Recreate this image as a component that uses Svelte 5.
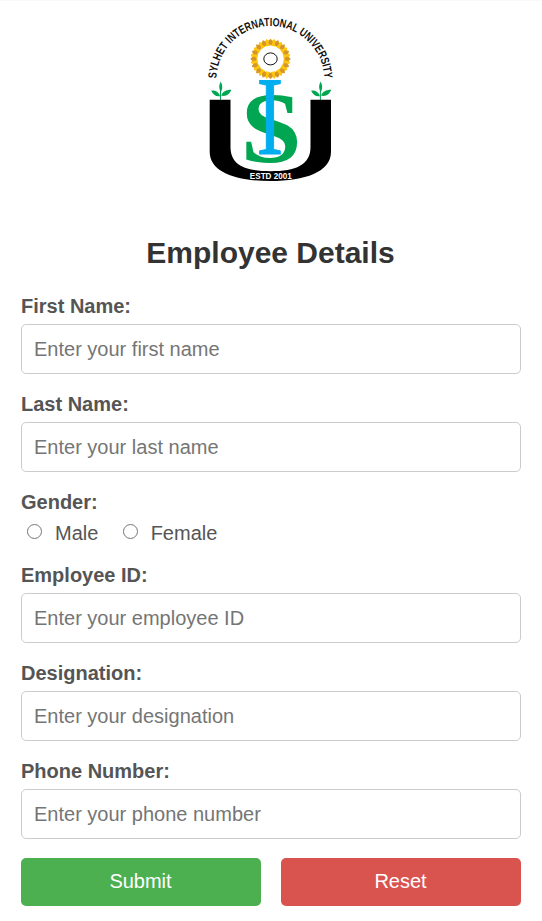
<script>
  const petals = Array.from({ length: 16 }, (_, i) => i * 22.5);
  const textFields = [
    { id: 'first', label: 'First Name:', hint: 'Enter your first name' },
    { id: 'last', label: 'Last Name:', hint: 'Enter your last name' }
  ];
  const workFields = [
    { id: 'employee', label: 'Employee ID:', hint: 'Enter your employee ID' },
    { id: 'designation', label: 'Designation:', hint: 'Enter your designation' },
    { id: 'phone', label: 'Phone Number:', hint: 'Enter your phone number' }
  ];
</script>

{#snippet field(f)}
  <div class="field">
    <label class="title" for={f.id}>{f.label}</label>
    <input class="text" id={f.id} type="text" placeholder={f.hint} />
  </div>
{/snippet}

{#snippet sprout(x)}
  <g transform="translate({x} 0)" fill="#00a651">
    <path d="M0.200 81.500 C2.300 85 2.200 88.500 0.400 92 C-2 88.500 -1.700 85 0.200 81.500Z" />
    <path d="M-9.300 90.500 C-5 90.200 -1.500 92 -0.500 96.200 C-4.500 97 -7.500 94.700 -9.300 90.500Z" />
    <path d="M10.800 89.800 C9 94.700 5 97 0.500 95.500 C2.200 91.800 6 89.600 10.800 89.800Z" />
    <path d="M0 90 V100" stroke="#00a651" stroke-width="1" />
  </g>
{/snippet}

<main>
  <svg class="logo" viewBox="200 8 140 180" width="140" height="180" role="img" aria-label="Sylhet International University">
    <path id="arch" d="M216.400 80.300 A54 54.300 0 0 1 324.400 80.300" fill="none" />
    <text class="arch-text"><textPath href="#arch" startOffset="2" textLength="166" lengthAdjust="spacingAndGlyphs">SYLHET INTERNATIONAL UNIVERSITY</textPath></text>
    <g transform="translate(270.500 58.900)">
      {#each petals as angle}
        <path transform="rotate({angle + 11.25})" d="M-2.200 -13 C-4 -16 -2.500 -18 0 -20.200 C2.500 -18 4 -16 2.200 -13Z" fill="#fdc70c" />
      {/each}
      {#each petals as angle}
        <path transform="rotate({angle})" d="M-0.800 -14 C-3 -16.500 -2 -18.500 0 -20.200 C2 -18.500 3 -16.500 0.800 -14Z" fill="#d6952a" />
      {/each}
      <ellipse rx="6.700" ry="6" fill="#fff" stroke="#111" stroke-width="1" />
    </g>
    {@render sprout(220.5)}
    {@render sprout(320.4)}
    <path d="M209.700 99.700 H230.500 V147 C230.500 165 245 171.200 270.500 171.200 S310.500 165 310.500 147 V99.700 H331 V152 C331 172 305 181 270.500 181 S209.700 172 209.700 152Z" fill="#000" />
    <text class="letter-s" transform="translate(271.100 162.600) scale(1.080 1)">S</text>
    <text class="letter-i" transform="translate(269.800 154.400) scale(0.700 1)">I</text>
    <text class="estd" x="249.800" y="178.900" textLength="42" lengthAdjust="spacingAndGlyphs">ESTD 2001</text>
  </svg>

  <h1>Employee Details</h1>

  <form>
    {#each textFields as f}{@render field(f)}{/each}
    <div class="gender">
      <div class="title">Gender:</div>
      <div class="options">
        <label><input type="radio" name="gender" value="male" />Male</label>
        <label><input type="radio" name="gender" value="female" />Female</label>
      </div>
    </div>
    {#each workFields as f}{@render field(f)}{/each}
    <div class="actions">
      <button class="submit" type="button">Submit</button>
      <button class="reset" type="reset">Reset</button>
    </div>
  </form>
</main>

<style>
  :global(body) { margin: 0; background: #fff; }
  main {
    box-sizing: border-box;
    width: 542px;
    height: 921px;
    padding: 7px 21px 0;
    border-top: 1px solid #f9f9f9;
    overflow: hidden;
    font-family: "Liberation Sans", Arial, sans-serif;
    font-size: 20px;
    color: #555;
  }
  .logo { display: block; margin: 0 160px 0 179px; }
  .arch-text { font: bold 11.8px "Liberation Sans", Arial, sans-serif; fill: #111; }
  .estd { font: bold 8.7px "Liberation Sans", Arial, sans-serif; fill: #fff; }
  .letter-s {
    font: bold 102px "Liberation Serif", "Times New Roman", serif;
    fill: #00a651;
    text-anchor: middle;
  }
  .letter-i {
    font: 113px "Liberation Serif", "Times New Roman", serif;
    fill: #00aeef;
    stroke: #00aeef;
    stroke-width: 1.2px;
    text-anchor: middle;
  }
  h1 {
    margin: 47px 0 0;
    padding-right: 1px;
    font-size: 30px;
    line-height: 36px;
    text-align: center;
    color: #333;
  }
  form { margin-top: 23px; }
  .title { display: block; height: 30px; line-height: 24px; font-weight: bold; }
  .field { height: 98px; }
  .text {
    box-sizing: border-box;
    display: block;
    width: 500px;
    height: 50px;
    margin: 0;
    padding: 0 12px;
    border: 1px solid #ccc;
    border-radius: 5px;
    background: #fff;
    font: inherit;
  }
  .text::placeholder { color: #757575; opacity: 1; }
  .gender { height: 73px; }
  .options { display: flex; gap: 24.3px; padding-left: 6px; line-height: 26px; }
  .options label { display: flex; align-items: center; }
  .options input {
    appearance: none;
    box-sizing: border-box;
    width: 15px;
    height: 15px;
    margin: -3px 13px 0 0;
    border: 1px solid #767676;
    border-radius: 50%;
    background: #fff;
  }
  .actions { display: flex; gap: 20px; padding-top: 1px; }
  button {
    flex: 1;
    height: 48px;
    padding: 0 1px 2px 0;
    border: 0;
    border-radius: 5px;
    font: inherit;
    color: #fff;
  }
  .submit { background: #4caf50; }
  .reset { background: #d9534f; }
</style>
